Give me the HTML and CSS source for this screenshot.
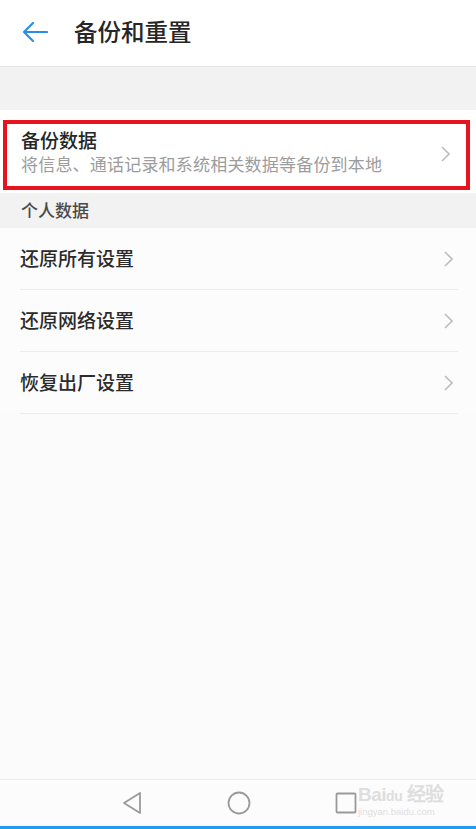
FILE: index.html
```html
<!DOCTYPE html>
<html lang="zh-CN">
<head>
  <meta charset="UTF-8">
  <meta name="viewport" content="width=device-width, initial-scale=1.0">
  <title>备份和重置</title>
  <link rel="stylesheet" href="styles.css">
</head>
<body>
  <div class="screen">
    <header class="topbar">
      <svg class="back" width="26" height="22" viewBox="0 0 26 22">
        <path d="M25 11H2M11 2L2 11L11 20" fill="none" stroke="#2a8ee8" stroke-width="2.2" stroke-linecap="round" stroke-linejoin="round"/>
      </svg>
      <h1>备份和重置</h1>
    </header>
    <div class="gap-band"></div>

    <section class="backup">
      <div class="highlight">
        <div class="item-text">
          <div class="item-title">备份数据</div>
          <div class="item-sub">将信息、通话记录和系统相关数据等备份到本地</div>
        </div>
        <svg class="chevron" width="9" height="16" viewBox="0 0 9 16"><path d="M1 1L8 8L1 15" fill="none" stroke="#bdbdbd" stroke-width="1.6"/></svg>
      </div>
    </section>

    <div class="group-label">个人数据</div>

    <ul class="list">
      <li class="row">
        <span>还原所有设置</span>
        <svg class="chevron" width="9" height="16" viewBox="0 0 9 16"><path d="M1 1L8 8L1 15" fill="none" stroke="#bdbdbd" stroke-width="1.6"/></svg>
      </li>
      <li class="row">
        <span>还原网络设置</span>
        <svg class="chevron" width="9" height="16" viewBox="0 0 9 16"><path d="M1 1L8 8L1 15" fill="none" stroke="#bdbdbd" stroke-width="1.6"/></svg>
      </li>
      <li class="row">
        <span>恢复出厂设置</span>
        <svg class="chevron" width="9" height="16" viewBox="0 0 9 16"><path d="M1 1L8 8L1 15" fill="none" stroke="#bdbdbd" stroke-width="1.6"/></svg>
      </li>
    </ul>

    <div class="filler"></div>

    <nav class="navbar">
      <svg width="22" height="24" viewBox="0 0 22 24"><path d="M19 2L3 12L19 22Z" fill="none" stroke="#9a9a9a" stroke-width="1.8" stroke-linejoin="round"/></svg>
      <svg width="24" height="24" viewBox="0 0 24 24"><circle cx="12" cy="12" r="10.5" fill="none" stroke="#9a9a9a" stroke-width="1.8"/></svg>
      <svg width="22" height="22" viewBox="0 0 22 22"><rect x="1.5" y="1.5" width="19" height="19" rx="1" fill="none" stroke="#9a9a9a" stroke-width="1.8"/></svg>
      <div class="watermark">
        <div class="wm-top">Bai<span class="wm-du">du</span> 经验</div>
        <div class="wm-url">jingyan.baidu.com</div>
      </div>
    </nav>
    <div class="bottom-line"></div>
  </div>
</body>
</html>
```

FILE: styles.css
```css
html, body {
  margin: 0;
  padding: 0;
  height: 100%;
}
body {
  font-family: "Noto Sans CJK SC", "Noto Sans", sans-serif;
  background: #fbfbfb;
  color: #2b2b2b;
}
.screen {
  display: flex;
  flex-direction: column;
  height: 100vh;
}
.topbar {
  display: flex;
  align-items: center;
  height: 66px;
  background: #ffffff;
  border-bottom: 1px solid #e4e4e4;
  box-shadow: 0 1px 2px rgba(0, 0, 0, 0.06);
  padding-left: 22px;
}
.back { margin-right: 26px; margin-top: -2px; }
.topbar h1 {
  margin: 0;
  font-size: 23.5px;
  font-weight: 500;
  color: #262626;
  margin-top: -4px;
}
.gap-band {
  height: 43px;
  background: #f2f2f2;
}
.backup {
  background: #ffffff;
  padding: 10px 6px 3px 3px;
}
.highlight {
  box-sizing: border-box;
  display: flex;
  align-items: center;
  border: 4px solid #e8131d;
  padding: 0 16px 9px 14px;
  height: 70px;
}
.highlight .chevron { margin-top: 6px; }
.item-text { flex: 1; }
.item-title {
  font-size: 19px;
  line-height: 26px;
  color: #262626;
  font-weight: 500;
}
.item-sub {
  font-size: 17px;
  line-height: 22px;
  color: #9c9c9c;
  letter-spacing: 0.2px;
}
.chevron { flex-shrink: 0; }
.group-label {
  background: #f2f2f2;
  height: 35px;
  line-height: 33px;
  padding-left: 21px;
  font-size: 17px;
  font-weight: 500;
  color: #4a4a4a;
}
.list {
  list-style: none;
  margin: 0;
  padding: 0 0 0 20px;
  background: #fcfcfc;
}
.row {
  display: flex;
  align-items: center;
  justify-content: space-between;
  height: 61px;
  margin-right: 18px;
  padding-right: 5px;
  border-bottom: 1px solid #ececec;
  font-size: 19px;
  color: #2b2b2b;
  font-weight: 500;
}
.row span { margin-top: -2px; }
.filler { flex: 1; background: #fbfbfb; }
.navbar {
  position: relative;
  display: flex;
  align-items: center;
  justify-content: center;
  gap: 84px;
  height: 46px;
  border-top: 1px solid #ececec;
  background: #fcfcfc;
  padding-left: 2px;
}
.watermark {
  position: absolute;
  left: 358px;
  top: 5px;
  color: #dedede;
  line-height: 1;
}
.wm-top {
  font-family: "Liberation Sans", sans-serif;
  font-size: 19px;
  font-weight: bold;
  letter-spacing: -0.5px;
}
.wm-du { font-size: 14px; }
.wm-url {
  font-family: "Liberation Sans", sans-serif;
  font-size: 9.5px;
  margin-top: 3px;
}
.bottom-line {
  height: 3px;
  background: #1e9cf0;
}
```
